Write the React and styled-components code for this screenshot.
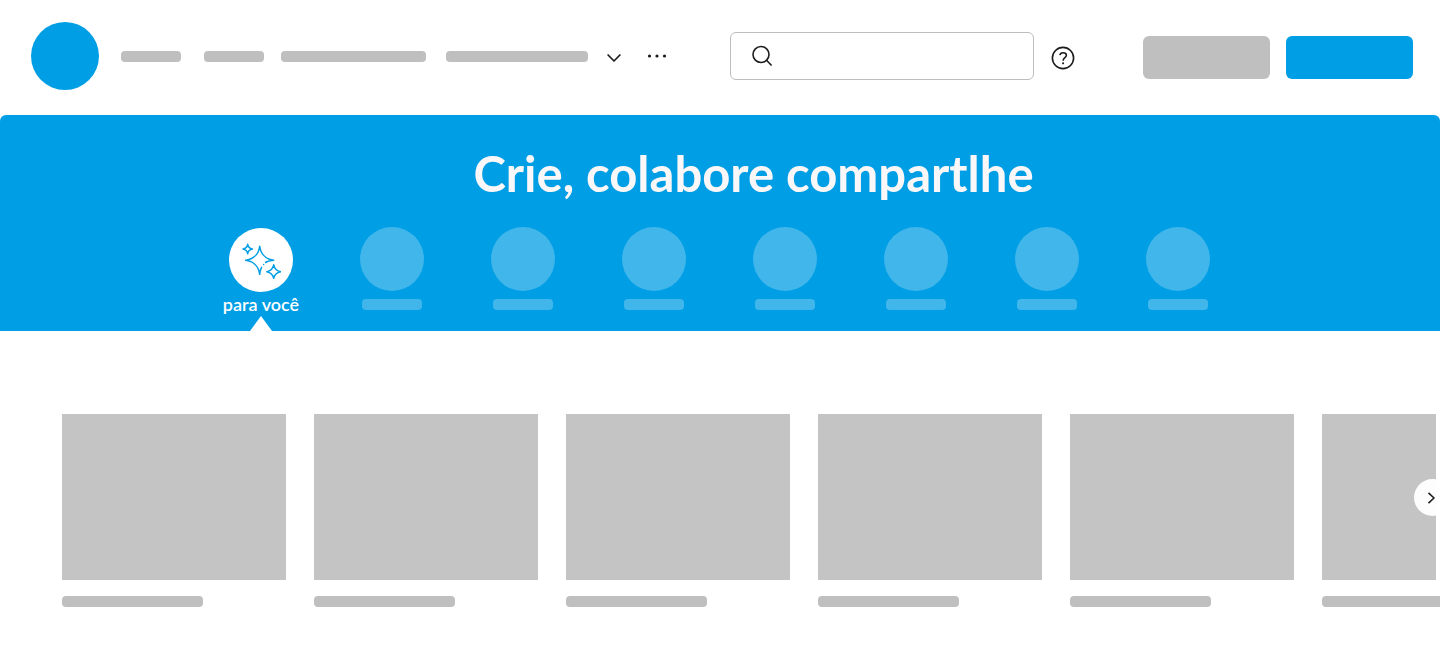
import React from "react";
import styled, { createGlobalStyle, css } from "styled-components";

const BLUE = "#009ee5";
const GREY = "#bfbfbf";
const INK = "#1c1c1f";

const GlobalStyle = createGlobalStyle`
  *, *::before, *::after { box-sizing: border-box; }
  body { margin: 0; background: #fff; font-family: Lato, "Open Sans", sans-serif; }
`;

const Page = styled.div`
  min-height: 100vh;
  overflow: hidden;
`;

const ButtonBase = styled.button`
  padding: 0;
  border: 0;
  background: none;
  color: ${INK};
  font: inherit;
  cursor: pointer;
`;

const Header = styled.header`
  display: flex;
  align-items: center;
  padding: 22px 27px 25px 31px;
`;

const Logo = styled.a`
  flex: none;
  width: 68px;
  height: 68px;
  margin-right: 22px;
  border-radius: 50%;
  background: ${BLUE};
`;

const Nav = styled.nav`
  display: flex;
  align-items: center;
  flex: none;
`;

const NavLink = styled.a`
  width: ${(p) => p.$width}px;
  height: 11px;
  margin-right: ${(p) => p.$space}px;
  border-radius: 4px;
  background: ${GREY};
`;

const IconButton = styled(ButtonBase)`
  display: flex;
  flex: none;
  margin-right: ${(p) => p.$space}px;
`;

const HelpButton = styled(ButtonBase)`
  display: flex;
  flex: none;
  margin: 4px 68px 0 17px;
`;

const Search = styled.label`
  display: flex;
  align-items: center;
  flex: 1;
  min-width: 0;
  height: 48px;
  padding: 0 20px;
  gap: 12px;
  border: 1px solid #bdbdbd;
  border-radius: 6px;
  color: ${INK};
`;

const SearchInput = styled.input`
  flex: 1;
  min-width: 0;
  border: 0;
  outline: 0;
  background: none;
  font: inherit;
  font-size: 16px;
`;

const Actions = styled.div`
  display: flex;
  gap: 16px;
  padding-top: 3px;
`;

const Action = styled(ButtonBase)`
  width: 127px;
  height: 43px;
  border-radius: 6px;
  background: ${(p) => (p.$primary ? BLUE : GREY)};
`;

const Banner = styled.section`
  padding-top: 30px;
  border-radius: 6px 6px 0 0;
  background: ${BLUE};
`;

const Title = styled.h1`
  margin: 0 0 26px;
  padding-left: 67px;
  color: #faf7f8;
  font-size: 49px;
  font-weight: 700;
  line-height: 56px;
  text-align: center;
`;

const Tabs = styled.div`
  display: flex;
  gap: 51px;
  max-width: 998px;
  margin: 0 auto;
`;

const Tab = styled(ButtonBase)`
  position: relative;
  display: flex;
  flex-direction: column;
  align-items: center;
  width: 80px;
  height: 104px;
  color: #fff;

  ${(p) =>
    p.$active &&
    css`
      padding-top: 1px;

      &::after {
        content: "";
        position: absolute;
        bottom: 0;
        left: 29px;
        border: 11px solid transparent;
        border-top: 0;
        border-bottom: 15px solid #fff;
      }
    `}
`;

const TabCircle = styled.span`
  display: flex;
  align-items: center;
  justify-content: center;
  flex: none;
  width: 64px;
  height: 64px;
  border-radius: 50%;
  background: ${(p) => (p.$active ? "#fff" : "rgba(255, 255, 255, 0.25)")};
  color: ${BLUE};
`;

const TabBar = styled.span`
  width: 60px;
  height: 11px;
  margin-top: 8px;
  border-radius: 4px;
  background: rgba(255, 255, 255, 0.25);
`;

const TabLabel = styled.span`
  font-size: 18px;
  font-weight: 600;
  line-height: 24px;
  white-space: nowrap;
`;

const Carousel = styled.section`
  position: relative;
  padding: 83px 0 55px 62px;
  overflow: hidden;
`;

const Track = styled.div`
  display: flex;
  gap: 28px;
`;

const Card = styled.article`
  flex: none;
  width: 224px;
`;

const Thumb = styled.div`
  height: 166px;
  background: #c4c4c4;
`;

const CardBar = styled.div`
  width: 141px;
  height: 11px;
  margin-top: 16px;
  border-radius: 4px;
  background: ${GREY};
`;

const Edge = styled.div`
  position: absolute;
  top: 83px;
  right: 0;
  width: 4px;
  height: 166px;
  background: #fff;
`;

const NextButton = styled(ButtonBase)`
  position: absolute;
  top: 148px;
  right: -11px;
  display: flex;
  align-items: center;
  width: 37px;
  height: 37px;
  padding-left: 13px;
  border-radius: 50%;
  background: #fdfdfd;
`;

const Stroke = ({ width, height, weight = 1.6, cap = "round", children }) => (
  <svg
    width={width}
    height={height}
    viewBox={`0 0 ${width} ${height}`}
    fill="none"
    stroke="currentColor"
    strokeWidth={weight}
    strokeLinecap={cap}
    strokeLinejoin="round"
    aria-hidden="true"
  >
    {children}
  </svg>
);

const Sparkles = () => (
  <Stroke width={40} height={38} weight={1.5}>
    <path d="M26 20.600C28 19.900 30.200 19.500 32.700 19.300C25 18.300 19.700 13 18.700 5.300C17.700 13 12.400 18.300 4.700 19.300C12.400 20.300 17.700 25.600 18.700 33.300C19 30.700 19.500 28.400 20.600 26.400" />
    <path d="M22.600 23.500V23.600" />
    <path d="M24.600 21.500L26 20.600" />
    <path d="M6.700 3.300C7.200 6 8.700 7.500 11.400 8C8.700 8.500 7.200 10 6.700 12.700C6.200 10 4.700 8.500 2 8C4.700 7.500 6.200 6 6.700 3.300Z" />
    <path d="M32.700 23.800C33.500 27.700 35.700 29.900 39.600 30.700C35.700 31.500 33.500 33.700 32.700 37.300C31.900 33.700 29.700 31.500 25.800 30.700C29.700 29.900 31.900 27.700 32.700 23.800Z" />
  </Stroke>
);

const NAV = [
  [60, 23],
  [60, 17],
  [145, 20],
  [142, 19],
];

export default function App() {
  return (
    <Page>
      <GlobalStyle />
      <Header>
        <Logo href="#" aria-label="Home" />
        <Nav>
          {NAV.map(([width, space], i) => (
            <NavLink key={i} href="#" $width={width} $space={space} aria-label={`Menu ${i + 1}`} />
          ))}
          <IconButton aria-label="Expandir" $space={26}>
            <Stroke width={14} height={14} weight={1.7} cap="butt">
              <path d="M0.600 5.500L7 12L13.400 5.500" />
            </Stroke>
          </IconButton>
          <IconButton aria-label="Mais" $space={63}>
            <svg width="20" height="4" viewBox="0 0 20 4" fill="currentColor" aria-hidden="true">
              <circle cx="2.500" cy="2" r="1.600" />
              <circle cx="10" cy="2" r="1.600" />
              <circle cx="17.500" cy="2" r="1.600" />
            </svg>
          </IconButton>
        </Nav>
        <Search>
          <Stroke width={22} height={22} cap="butt">
            <circle cx="10" cy="9.500" r="8" />
            <path d="M15.500 15.200L20.600 20.500" />
          </Stroke>
          <SearchInput type="search" aria-label="Buscar" />
        </Search>
        <HelpButton aria-label="Ajuda">
          <Stroke width={24} height={24} cap="butt">
            <circle cx="12" cy="12" r="10.600" />
            <path d="M8.900 9.200C9.200 7.500 10.400 6.700 12.100 6.700C14 6.700 15.400 7.700 15.400 9.300C15.400 11.700 12.100 11.500 12.100 14.800" />
            <path d="M12.100 16.400V18.200" strokeWidth="1.900" />
          </Stroke>
        </HelpButton>
        <Actions>
          <Action aria-label="Entrar" />
          <Action aria-label="Cadastrar" $primary />
        </Actions>
      </Header>

      <Banner>
        <Title>Crie, colabore compartlhe</Title>
        <Tabs role="tablist">
          <Tab role="tab" aria-selected="true" $active>
            <TabCircle $active>
              <Sparkles />
            </TabCircle>
            <TabLabel>para você</TabLabel>
          </Tab>
          {Array.from({ length: 7 }, (_, i) => (
            <Tab key={i} role="tab" aria-selected="false" aria-label={`Categoria ${i + 1}`}>
              <TabCircle />
              <TabBar />
            </Tab>
          ))}
        </Tabs>
      </Banner>

      <Carousel>
        <Track>
          {Array.from({ length: 6 }, (_, i) => (
            <Card key={i}>
              <Thumb />
              <CardBar />
            </Card>
          ))}
        </Track>
        <NextButton aria-label="Próximo">
          <Stroke width={8} height={14} cap="butt">
            <path d="M1.500 1.800L7 7L1.500 12.200" />
          </Stroke>
        </NextButton>
        <Edge />
      </Carousel>
    </Page>
  );
}
